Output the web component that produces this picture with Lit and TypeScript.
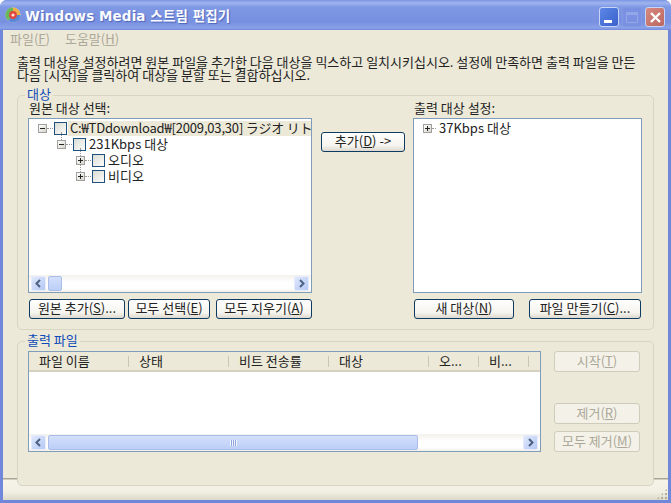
import { LitElement, html, css, nothing } from "lit";
import { customElement } from "lit/decorators.js";

const arrowL = html`<svg width="9" height="9" viewBox="0 0 9 9"><path d="M6 1 L2.5 4.5 L6 8" fill="none" stroke="#4d6185" stroke-width="2"/></svg>`;
const arrowR = html`<svg width="9" height="9" viewBox="0 0 9 9"><path d="M3 1 L6.5 4.5 L3 8" fill="none" stroke="#4d6185" stroke-width="2"/></svg>`;

const appIcon = html`<svg width="16" height="16" viewBox="0 0 16 16">
  <circle cx="8" cy="8" r="7.5" fill="#e8e6da"/>
  <path d="M8 .5A7.5 7.5 0 0 1 15.5 8L8 8Z" fill="#eeb04a"/>
  <path d="M15.5 8A7.5 7.5 0 0 1 3 13.6L8 8Z" fill="#5a88d8"/>
  <path d="M3 13.6A7.5 7.5 0 0 1 8 .5L8 8Z" fill="#6ab85a"/>
  <circle cx="8" cy="8" r="3.9" fill="#e0483f"/>
  <circle cx="8" cy="8" r="1.6" fill="#f8e4da"/>
</svg>`;

function ul(before: string, key: string, after: string) {
  return html`${before}(<u>${key}</u>)${after}`;
}

@customElement("app-root")
export class AppRoot extends LitElement {
  static styles = css`
    :host {
      display: block;
      width: 671px;
      height: 503px;
      overflow: hidden;
      font: 13px/14px "Noto Sans CJK KR", "Liberation Sans", sans-serif;
      color: #222;
    }
    * { box-sizing: border-box; }
    .window {
      width: 671px;
      height: 503px;
      display: flex;
      flex-direction: column;
      background: #7087dc;
      border-radius: 7px 7px 0 0;
      position: relative;
    }
    .title {
      height: 30px;
      flex: none;
      display: flex;
      align-items: center;
      gap: 4px;
      padding: 0 2px 0 5px;
      border-radius: 7px 7px 0 0;
      background: linear-gradient(#7d96e4 0, #9fb4ee 3px, #7f98e4 7px, #7890e0 22px, #8aa2e8 28px, #7087dc 30px);
      color: #fbfcff;
      font: bold 13.5px/16px "DejaVu Sans", "Noto Sans CJK KR", sans-serif;
      text-shadow: 1px 1px 1px #4e66b8;
    }
    .title .text { flex: 1; letter-spacing: 0.1px; padding-top: 1px; }
    .caps { display: flex; gap: 3px; padding: 4px 4px 0 0; }
    .cap {
      width: 20px;
      height: 20px;
      border-radius: 3px;
      border: 1px solid #c8d4f6;
      display: flex;
      align-items: center;
      justify-content: center;
    }
    .cap.min { background: linear-gradient(135deg, #5c86e6, #3a62cc); }
    .cap.min i { width: 8px; height: 3px; background: #fff; margin-top: 9px; margin-right: 3px; }
    .cap.max { background: #7a90e0; border-color: #8398e2; }
    .cap.max i { width: 12px; height: 11px; border: 1px solid #93a6e8; border-top-width: 3px; }
    .cap.close { background: linear-gradient(135deg, #d88a80, #b9665f); }
    .body {
      flex: 1;
      margin: 0 3px 3px;
      display: flex;
      flex-direction: column;
      position: relative;
      background: linear-gradient(#ece9d8 0, #ece9d8 448px, #a8a596 448px, #a8a596 449px, #f6f4ea 450px, #f1efe3 462px, #dcd9c8 470px);
    }
    .menu {
      height: 20px;
      flex: none;
      display: flex;
      align-items: center;
      gap: 15px;
      padding: 0 0 3px 7px;
      color: #aca899;
    }
    .desc { margin: 5px 0 0 14px; line-height: 13px; white-space: nowrap; height: 27px; }
    .group {
      margin: 0 14px;
      border: 1px solid #d8d5c3;
      border-radius: 5px;
      position: relative;
      background: #ece9d8;
      flex: none;
    }
    .g1 { margin-top: 13px; height: 235px; padding: 5px 11px 0 10px; }
    .g2 { margin-top: 11px; height: 145px; padding: 9px 13px 0 10px; display: flex; justify-content: space-between; }
    .legend {
      position: absolute;
      left: 7px;
      top: -9px;
      padding: 0 2px;
      background: #ece9d8;
      color: #0f4bb8;
      line-height: 13px;
    }
    .cols { display: grid; grid-template-columns: 284px 101px 229px; }
    .col { display: flex; flex-direction: column; }
    .lbl { height: 17px; line-height: 14px; padding-left: 1px; white-space: nowrap; }
    .tree {
      height: 175px;
      border: 1px solid #7f9db9;
      background: #fff;
      display: flex;
      flex-direction: column;
      overflow: hidden;
    }
    .rows { flex: 1; padding-top: 1px; overflow: hidden; }
    .row { height: 16px; display: flex; align-items: center; white-space: nowrap; }
    .exp {
      width: 9px;
      height: 9px;
      border: 1px solid #a0a0a0;
      background: linear-gradient(135deg, #fff, #d8d4c8);
      position: relative;
      flex: none;
    }
    .exp::before { content: ""; position: absolute; left: 1px; top: 3px; width: 5px; height: 1px; background: #222; }
    .exp.plus::after { content: ""; position: absolute; left: 3px; top: 1px; width: 1px; height: 5px; background: #222; }
    .exp i { position: absolute; left: 3px; top: -9px; height: 8px; border-left: 1px dotted #999; }
    .dash { width: 6px; flex: none; border-top: 1px dotted #999; margin-right: 1px; }
    .dash.short { width: 4px; margin-right: 0; }
    .chk {
      width: 13px;
      height: 13px;
      border: 1px solid #1c5180;
      background: linear-gradient(135deg, #dcdcd6, #fbfbf9);
      flex: none;
    }
    .txt { padding: 0 2px 2px; margin-left: 1px; line-height: 13px; }
    .txt.sel { background: #ece9d8; flex: 1; letter-spacing: -0.18px; }
    .hs {
      height: 17px;
      flex: none;
      display: flex;
      align-items: center;
      padding: 0 2px;
      background: linear-gradient(#f3f1ec, #fefefe 40%, #fefefe 80%, #f0efe8);
    }
    .sb {
      width: 15px;
      height: 15px;
      flex: none;
      border-radius: 2px;
      border: 1px solid #e6ecfb;
      background: linear-gradient(135deg, #dfe8fc, #b6c9f4);
      display: flex;
      align-items: center;
      justify-content: center;
    }
    .thumb {
      height: 15px;
      flex: none;
      margin-left: 2px;
      border: 1px solid #a9bde8;
      border-radius: 2px;
      background: linear-gradient(#d3dffb, #bccff8);
      display: flex;
      align-items: center;
      justify-content: center;
    }
    .grip { width: 7px; height: 6px; background: repeating-linear-gradient(90deg, #f1f5fe 0 1px, #8ea6dc 1px 2px); }
    .sp { flex: 1; }
    .midcol { padding: 15px 0 0 9px; }
    .midcol .lbl { height: 16px; }
    .btn {
      height: 20px;
      border: 1px solid #0f3a62;
      border-radius: 3px;
      background: linear-gradient(#fefefe, #f5f4ee 70%, #dcd9cf);
      display: flex;
      align-items: center;
      justify-content: center;
      white-space: pre;
      flex: none;
      padding-bottom: 2px;
    }
    .btn.off {
      border-color: #cfccbc;
      background: #f3f1e8;
      color: #aca899;
      width: 86px;
      height: 21px;
    }
    .btns { display: flex; margin-top: 6px; }
    .list {
      width: 513px;
      height: 101px;
      border: 1px solid #7f9db9;
      background: #fff;
      display: flex;
      flex-direction: column;
    }
    .head {
      height: 20px;
      flex: none;
      display: flex;
      background: #ece9d8;
      border-bottom: 2px solid #d6d2c2;
    }
    .hc { flex: none; padding: 0 0 0 10px; line-height: 17px; position: relative; white-space: nowrap; }
    .hc::after { content: ""; position: absolute; right: 0; top: 4px; bottom: 3px; width: 1px; background: #c9c6b4; }
    .actions { display: flex; flex-direction: column; width: 86px; }
    .grow { flex: 1; }
    .resize {
      position: absolute;
      right: 0;
      bottom: 0;
      width: 12px;
      height: 12px;
      background-image: radial-gradient(circle, #b0ad9a 1px, transparent 1.2px);
      background-size: 4px 4px;
      clip-path: polygon(100% 0, 100% 100%, 0 100%);
    }
  `;

  private treeRow(indent: number, open: boolean, label: unknown, selected = false, linked = true) {
    return html`<div class="row" style="padding-left:${indent}px">
      <span class="exp ${open ? "" : "plus"}">${linked ? html`<i></i>` : nothing}</span><span class="dash"></span><span class="chk"></span
      ><span class="txt ${selected ? "sel" : ""}">${label}</span>
    </div>`;
  }

  private hscroll(thumbW: number, grip: boolean) {
    return html`<div class="hs">
      <div class="sb">${arrowL}</div>
      <div class="thumb" style="width:${thumbW}px">${grip ? html`<div class="grip"></div>` : nothing}</div>
      <div class="sp"></div>
      <div class="sb">${arrowR}</div>
    </div>`;
  }

  render() {
    const cols: [string, number][] = [
      ["파일 이름", 100], ["상태", 100], ["비트 전송률", 100], ["대상", 100], ["오...", 50], ["비...", 50],
    ];
    return html`<div class="window">
      <div class="title">
        ${appIcon}
        <span class="text">Windows Media 스트림 편집기</span>
        <div class="caps">
          <div class="cap min"><i></i></div>
          <div class="cap max"><i></i></div>
          <div class="cap close"><svg width="13" height="13" viewBox="0 0 13 13"><path d="M2 2 L11 11 M11 2 L2 11" stroke="#fff" stroke-width="2.4"/></svg></div>
        </div>
      </div>
      <div class="body">
        <div class="menu"><span>${ul("파일", "F", "")}</span><span>${ul("도움말", "H", "")}</span></div>
        <div class="desc">출력 대상을 설정하려면 원본 파일을 추가한 다음 대상을 믹스하고 일치시키십시오. 설정에 만족하면 출력 파일을 만든<br />다음 [시작]을 클릭하여 대상을 분할 또는 결합하십시오.</div>

        <div class="group g1">
          <span class="legend">대상</span>
          <div class="cols">
            <div class="col">
              <div class="lbl">원본 대상 선택:</div>
              <div class="tree">
                <div class="rows">
                  ${this.treeRow(9, true, "C:₩TDdownload₩[2009,03,30] ラジオ リト", true, false)}
                  ${this.treeRow(28, true, "231Kbps 대상")}
                  ${this.treeRow(47, false, "오디오")}
                  ${this.treeRow(47, false, "비디오")}
                </div>
                ${this.hscroll(14, false)}
              </div>
              <div class="btns">
                <div class="btn" style="width:96px;margin-left:1px">${ul("원본 추가", "S", "...")}</div>
                <div class="btn" style="width:82px;margin-left:3px">${ul("모두 선택", "E", "")}</div>
                <div class="btn" style="width:96px;margin-left:6px">${ul("모두 지우기", "A", "")}</div>
              </div>
            </div>
            <div class="col midcol"><div class="lbl"></div><div class="btn" style="width:84px">${ul("추가", "D", " ->")}</div></div>
            <div class="col">
              <div class="lbl">출력 대상 설정:</div>
              <div class="tree">
                <div class="rows"><div class="row" style="padding-left:9px"><span class="exp plus"></span><span class="dash short"></span><span class="txt">37Kbps 대상</span></div></div>
              </div>
              <div class="btns" style="justify-content:space-between;padding:0 1px">
                <div class="btn" style="width:100px">${ul("새 대상", "N", "")}</div>
                <div class="btn" style="width:112px">${ul("파일 만들기", "C", "...")}</div>
              </div>
            </div>
          </div>
        </div>

        <div class="group g2">
          <span class="legend">출력 파일</span>
          <div class="list">
            <div class="head">${cols.map(([t, w]) => html`<div class="hc" style="width:${w}px">${t}</div>`)}</div>
            <div class="grow"></div>
            ${this.hscroll(370, true)}
          </div>
          <div class="actions">
            <div class="btn off">${ul("시작", "T", "")}</div>
            <div class="btn off" style="margin-top:31px">${ul("제거", "R", "")}</div>
            <div class="btn off" style="margin-top:7px">${ul("모두 제거", "M", "")}</div>
          </div>
        </div>
        <div class="resize"></div>
      </div>
    </div>`;
  }
}
